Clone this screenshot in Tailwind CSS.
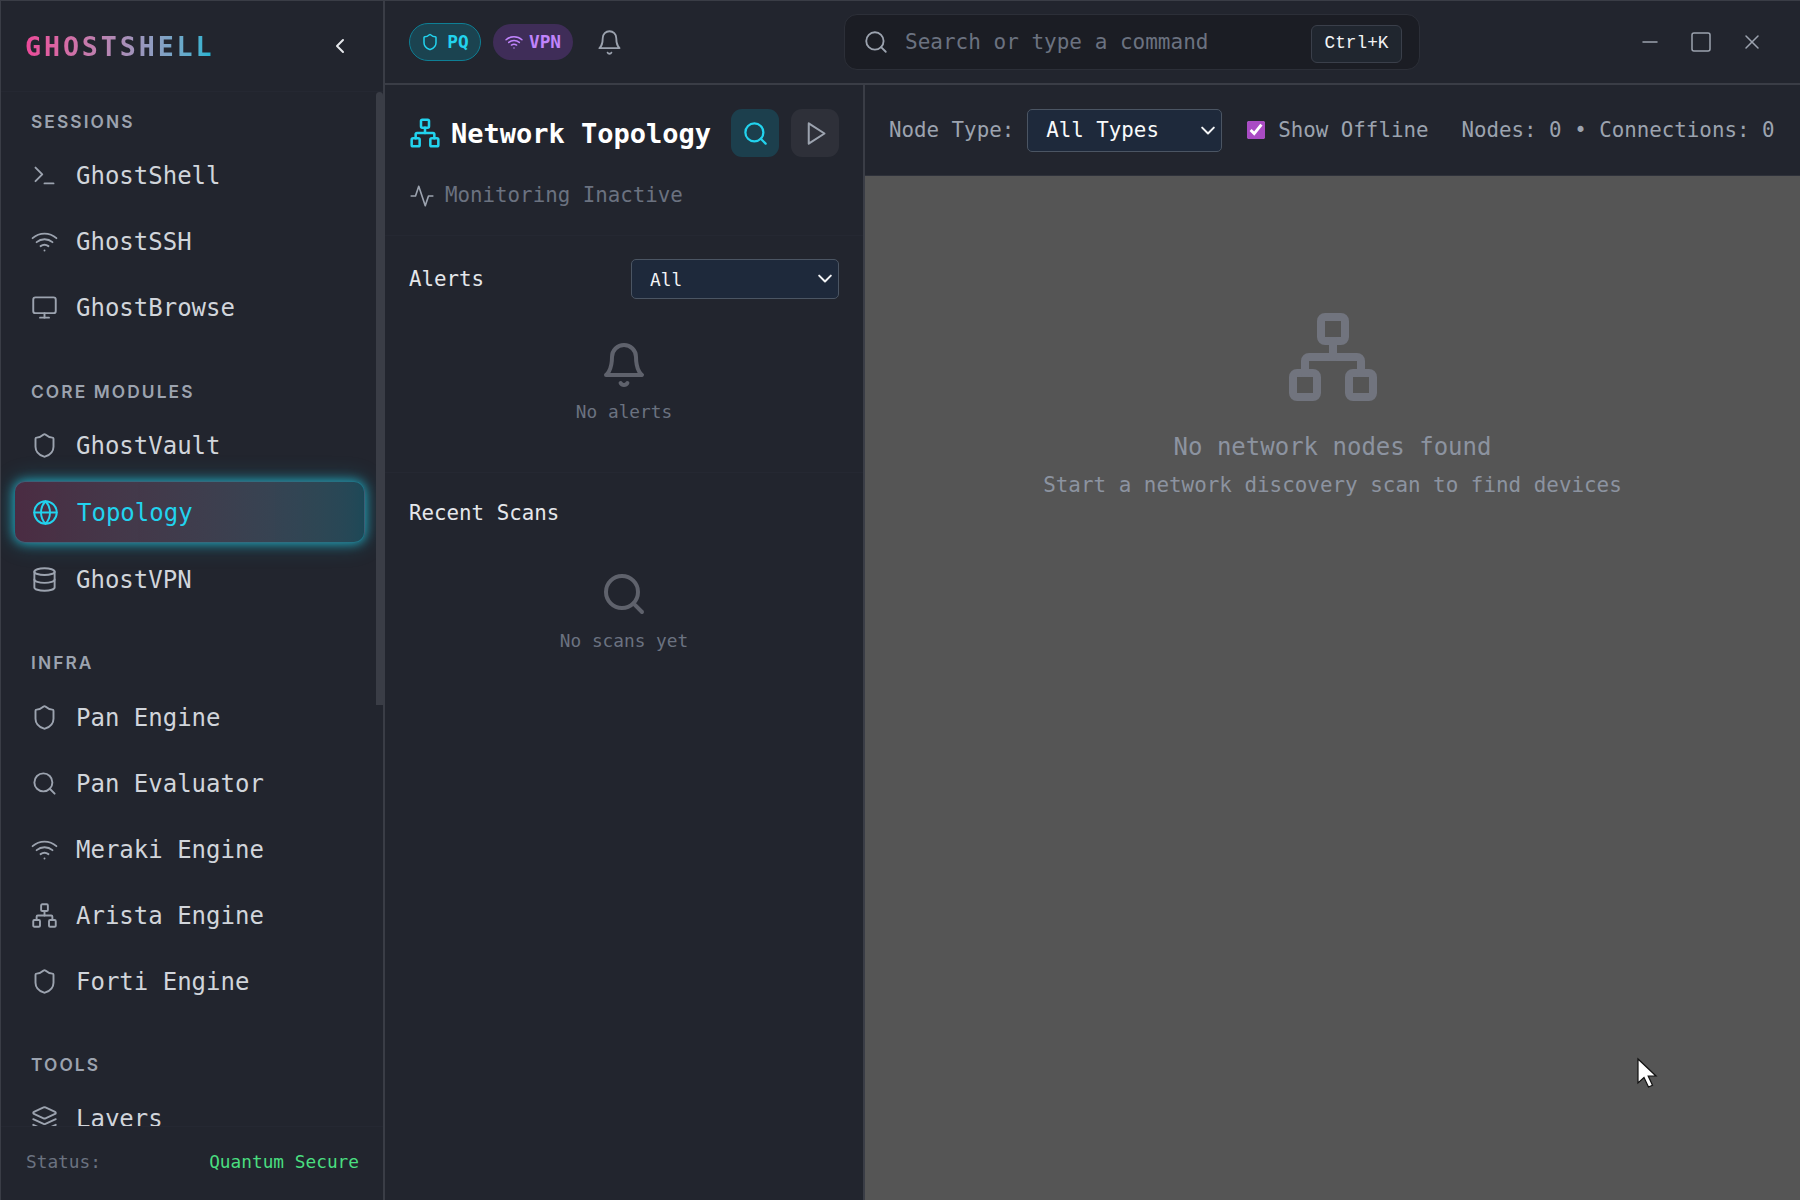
<!DOCTYPE html>
<html lang="en">
<head>
  <meta charset="UTF-8" />
  <title>GhostShell | Network Topology</title>
  <script src="https://cdn.jsdelivr.net/npm/@tailwindcss/browser@4"></script>
</head>
<body class="bg-[#22252e] overflow-hidden font-['DejaVu_Sans_Mono',monospace]">

  <!-- Icon sprites -->
  <svg class="hidden" xmlns="http://www.w3.org/2000/svg">
    <symbol id="i-terminal" viewBox="0 0 24 24"><polyline points="4 17 10 11 4 5"/><line x1="12" x2="20" y1="19" y2="19"/></symbol>
    <symbol id="i-wifi" viewBox="0 0 24 24"><path d="M5 12.55a11 11 0 0 1 14.08 0"/><path d="M1.42 9a16 16 0 0 1 21.16 0"/><path d="M8.53 16.11a6 6 0 0 1 6.95 0"/><line x1="12" x2="12.01" y1="20" y2="20"/></symbol>
    <symbol id="i-monitor" viewBox="0 0 24 24"><rect x="2" y="3" width="20" height="14" rx="2"/><line x1="8" x2="16" y1="21" y2="21"/><line x1="12" x2="12" y1="17" y2="21"/></symbol>
    <symbol id="i-shield" viewBox="0 0 24 24"><path d="M20 13c0 5-3.5 7.5-7.66 8.95a1 1 0 0 1-.67-.01C7.5 20.5 4 18 4 13V6a1 1 0 0 1 1-1c2 0 4.5-1.2 6.24-2.72a1.17 1.17 0 0 1 1.52 0C14.51 3.81 17 5 19 5a1 1 0 0 1 1 1z"/></symbol>
    <symbol id="i-globe" viewBox="0 0 24 24"><circle cx="12" cy="12" r="10"/><path d="M12 2a14.5 14.5 0 0 0 0 20 14.5 14.5 0 0 0 0-20"/><path d="M2 12h20"/></symbol>
    <symbol id="i-database" viewBox="0 0 24 24"><ellipse cx="12" cy="5" rx="9" ry="3"/><path d="M3 5V19A9 3 0 0 0 21 19V5"/><path d="M3 12A9 3 0 0 0 21 12"/></symbol>
    <symbol id="i-search" viewBox="0 0 24 24"><circle cx="11" cy="11" r="8"/><path d="m21 21-4.3-4.3"/></symbol>
    <symbol id="i-network" viewBox="0 0 24 24"><rect x="16" y="16" width="6" height="6" rx="1"/><rect x="2" y="16" width="6" height="6" rx="1"/><rect x="9" y="2" width="6" height="6" rx="1"/><path d="M5 16v-3a1 1 0 0 1 1-1h12a1 1 0 0 1 1 1v3"/><path d="M12 12V8"/></symbol>
    <symbol id="i-layers" viewBox="0 0 24 24"><path d="m12.83 2.18a2 2 0 0 0-1.66 0L2.6 6.08a1 1 0 0 0 0 1.83l8.58 3.91a2 2 0 0 0 1.66 0l8.58-3.9a1 1 0 0 0 0-1.83Z"/><path d="m22 17.65-9.17 4.16a2 2 0 0 1-1.66 0L2 17.65"/><path d="m22 12.65-9.17 4.16a2 2 0 0 1-1.66 0L2 12.65"/></symbol>
    <symbol id="i-bell" viewBox="0 0 24 24"><path d="M6 8a6 6 0 0 1 12 0c0 7 3 9 3 9H3s3-2 3-9"/><path d="M10.3 21a1.94 1.94 0 0 0 3.4 0"/></symbol>
    <symbol id="i-chevron" viewBox="0 0 24 24"><path d="m5 8 7 7 7-7"/></symbol>
  </svg>

  <div class="flex h-[1200px] w-[1800px] border-t border-l border-[#3a3d46]">

    <!-- Sidebar -->
    <aside class="relative flex h-full w-[384px] shrink-0 flex-col border-r-2 border-[#3a3d46]">
      <div class="flex h-[91px] shrink-0 items-center justify-between border-b border-[#252832] pl-[24px] pr-[31px]">
        <span class="mt-[1px] bg-gradient-to-r from-[#ec4899] to-[#06b6d4] bg-clip-text text-[26.67px] font-bold tracking-[2.9px] text-transparent">GHOSTSHELL</span>
        <svg class="h-6 w-6 text-[#e5e7eb]" fill="none" stroke="currentColor" stroke-width="2" stroke-linecap="round" stroke-linejoin="round" viewBox="0 0 24 24"><path d="m15 18-6-6 6-6"/></svg>
      </div>

      <nav class="min-h-0 flex-1 overflow-hidden pl-[13px] pr-[18px] pt-[18px] text-[24px] text-[#d1d5db]">
        <h4 class="mb-[11px] pl-[17px] font-['Inter',sans-serif] text-[17.33px] font-semibold leading-6 tracking-[2.1px] text-[#9ca3af]">SESSIONS</h4>
        <ul class="flex flex-col gap-[6px]">
          <li class="flex h-[60px] items-center gap-[18px] pl-[17px]"><svg class="h-[27px] w-[27px] shrink-0 text-[#9ca3af]" fill="none" stroke="currentColor" stroke-width="1.7" stroke-linecap="round" stroke-linejoin="round"><use href="#i-terminal"/></svg><span class="mt-[2px]">GhostShell</span></li>
          <li class="flex h-[60px] items-center gap-[18px] pl-[17px]"><svg class="h-[27px] w-[27px] shrink-0 text-[#9ca3af]" fill="none" stroke="currentColor" stroke-width="1.7" stroke-linecap="round" stroke-linejoin="round"><use href="#i-wifi"/></svg><span class="mt-[2px]">GhostSSH</span></li>
          <li class="flex h-[60px] items-center gap-[18px] pl-[17px]"><svg class="h-[27px] w-[27px] shrink-0 text-[#9ca3af]" fill="none" stroke="currentColor" stroke-width="1.7" stroke-linecap="round" stroke-linejoin="round"><use href="#i-monitor"/></svg><span class="mt-[2px]">GhostBrowse</span></li>
        </ul>

        <h4 class="mb-[11px] mt-[43px] pl-[17px] font-['Inter',sans-serif] text-[17.33px] font-semibold leading-6 tracking-[2.1px] text-[#9ca3af]">CORE MODULES</h4>
        <ul class="flex flex-col gap-[6px]">
          <li class="flex h-[60px] items-center gap-[18px] pl-[17px]"><svg class="h-[27px] w-[27px] shrink-0 text-[#9ca3af]" fill="none" stroke="currentColor" stroke-width="1.7" stroke-linecap="round" stroke-linejoin="round"><use href="#i-shield"/></svg><span class="mt-[2px]">GhostVault</span></li>
          <li class="flex h-[62px] items-center gap-[18px] rounded-[11px] border border-[#22d3ee]/30 bg-gradient-to-r from-[#ec4899]/20 to-[#06b6d4]/25 pl-[17px] text-[#22d3ee] shadow-[0_0_12px_rgba(34,211,238,0.75),0_0_24px_rgba(34,211,238,0.25)]"><svg class="h-[27px] w-[27px] shrink-0" fill="none" stroke="currentColor" stroke-width="1.7" stroke-linecap="round" stroke-linejoin="round"><use href="#i-globe"/></svg><span class="mt-[2px]">Topology</span></li>
          <li class="flex h-[60px] items-center gap-[18px] pl-[17px]"><svg class="h-[27px] w-[27px] shrink-0 text-[#9ca3af]" fill="none" stroke="currentColor" stroke-width="1.7" stroke-linecap="round" stroke-linejoin="round"><use href="#i-database"/></svg><span class="mt-[2px]">GhostVPN</span></li>
        </ul>

        <h4 class="mb-[12px] mt-[42px] pl-[17px] font-['Inter',sans-serif] text-[17.33px] font-semibold leading-6 tracking-[2.1px] text-[#9ca3af]">INFRA</h4>
        <ul class="flex flex-col gap-[6px]">
          <li class="flex h-[60px] items-center gap-[18px] pl-[17px]"><svg class="h-[27px] w-[27px] shrink-0 text-[#9ca3af]" fill="none" stroke="currentColor" stroke-width="1.7" stroke-linecap="round" stroke-linejoin="round"><use href="#i-shield"/></svg><span class="mt-[2px]">Pan Engine</span></li>
          <li class="flex h-[60px] items-center gap-[18px] pl-[17px]"><svg class="h-[27px] w-[27px] shrink-0 text-[#9ca3af]" fill="none" stroke="currentColor" stroke-width="1.7" stroke-linecap="round" stroke-linejoin="round"><use href="#i-search"/></svg><span class="mt-[2px]">Pan Evaluator</span></li>
          <li class="flex h-[60px] items-center gap-[18px] pl-[17px]"><svg class="h-[27px] w-[27px] shrink-0 text-[#9ca3af]" fill="none" stroke="currentColor" stroke-width="1.7" stroke-linecap="round" stroke-linejoin="round"><use href="#i-wifi"/></svg><span class="mt-[2px]">Meraki Engine</span></li>
          <li class="flex h-[60px] items-center gap-[18px] pl-[17px]"><svg class="h-[27px] w-[27px] shrink-0 text-[#9ca3af]" fill="none" stroke="currentColor" stroke-width="1.7" stroke-linecap="round" stroke-linejoin="round"><use href="#i-network"/></svg><span class="mt-[2px]">Arista Engine</span></li>
          <li class="flex h-[60px] items-center gap-[18px] pl-[17px]"><svg class="h-[27px] w-[27px] shrink-0 text-[#9ca3af]" fill="none" stroke="currentColor" stroke-width="1.7" stroke-linecap="round" stroke-linejoin="round"><use href="#i-shield"/></svg><span class="mt-[2px]">Forti Engine</span></li>
        </ul>

        <h4 class="mb-[11px] mt-[42px] pl-[17px] font-['Inter',sans-serif] text-[17.33px] font-semibold leading-6 tracking-[2.1px] text-[#9ca3af]">TOOLS</h4>
        <ul class="flex flex-col gap-[6px]">
          <li class="flex h-[60px] items-center gap-[18px] pl-[17px]"><svg class="h-[27px] w-[27px] shrink-0 text-[#9ca3af]" fill="none" stroke="currentColor" stroke-width="1.7" stroke-linecap="round" stroke-linejoin="round"><use href="#i-layers"/></svg><span class="mt-[2px]">Layers</span></li>
        </ul>
      </nav>

      <div class="flex h-[74px] shrink-0 items-center justify-between border-t border-[#252832] bg-[#22252e] pb-[2px] pl-[25px] pr-[24px] text-[17.8px]">
        <span class="text-[#6b7280]">Status:</span>
        <span class="text-[#4ade80]">Quantum Secure</span>
      </div>

      <!-- scrollbar thumb -->
      <div class="absolute right-0 top-[91px] h-[613px] w-[7px] rounded-t-[4px] bg-[#3a3d46]"></div>
    </aside>

    <!-- Main -->
    <div class="flex min-w-0 flex-1 flex-col">

      <header class="flex h-[84px] shrink-0 items-center border-b-2 border-[#3a3d46] pl-[24px]">
        <div class="flex items-center gap-[12px]">
          <span class="flex h-[38px] w-[72px] items-center justify-center gap-[8px] rounded-full border border-[#0e7f95] bg-[#1b4350] text-[17.8px] font-bold text-[#22d3ee]">
            <svg class="h-[18px] w-[18px]" fill="none" stroke="currentColor" stroke-width="2" stroke-linecap="round" stroke-linejoin="round"><use href="#i-shield"/></svg>PQ
          </span>
          <span class="flex h-[36px] w-[80px] items-center justify-center gap-[6px] rounded-full bg-[#3f2d58] text-[17.8px] font-bold text-[#c084fc]">
            <svg class="h-[18px] w-[18px]" fill="none" stroke="currentColor" stroke-width="2" stroke-linecap="round" stroke-linejoin="round"><use href="#i-wifi"/></svg>VPN
          </span>
        </div>
        <svg class="ml-[23px] h-[27px] w-[27px] text-[#9ca3af]" fill="none" stroke="currentColor" stroke-width="1.6" stroke-linecap="round" stroke-linejoin="round"><use href="#i-bell"/></svg>

        <div class="ml-[221px] flex h-[56px] w-[576px] items-center rounded-[13px] border border-[#2c2f38] bg-[#1b1d24] pl-[18px] pr-[17px]">
          <svg class="h-[26px] w-[26px] shrink-0 text-[#9ca3af]" fill="none" stroke="currentColor" stroke-width="1.7" stroke-linecap="round" stroke-linejoin="round"><use href="#i-search"/></svg>
          <span class="ml-[16px] mt-[1px] flex-1 text-[21px] text-[#6b7280]">Search or type a command</span>
          <kbd class="mt-[3px] flex h-[38px] w-[91px] items-center justify-center rounded-[6px] border border-[#3a3f4a] bg-[#20262f] text-[17.8px] text-[#f3f4f6]">Ctrl+K</kbd>
        </div>

        <div class="ml-auto flex items-center gap-[27px] pr-[36px] text-[#9ca3af]">
          <svg class="h-6 w-6" fill="none" stroke="currentColor" stroke-width="1.5" stroke-linecap="round" stroke-linejoin="round" viewBox="0 0 24 24"><path d="M5 12h14"/></svg>
          <svg class="h-6 w-6" fill="none" stroke="currentColor" stroke-width="1.5" stroke-linecap="round" stroke-linejoin="round" viewBox="0 0 24 24"><rect x="3" y="3" width="18" height="18" rx="2"/></svg>
          <svg class="h-6 w-6" fill="none" stroke="currentColor" stroke-width="1.5" stroke-linecap="round" stroke-linejoin="round" viewBox="0 0 24 24"><path d="M18 6 6 18"/><path d="m6 6 12 12"/></svg>
        </div>
      </header>

      <div class="flex min-h-0 flex-1">

        <!-- Left panel -->
        <section class="flex w-[480px] shrink-0 flex-col border-r-2 border-[#3a3d46]">
          <div class="h-[151px] shrink-0 border-b border-[#252832] pl-[24px] pr-[24px] pt-[24px]">
            <div class="flex h-[48px] items-center">
              <svg class="h-[32px] w-[32px] shrink-0 text-[#22d3ee]" fill="none" stroke="currentColor" stroke-width="1.9" stroke-linecap="round" stroke-linejoin="round"><use href="#i-network"/></svg>
              <h1 class="ml-[10px] mt-[2px] text-[27px] font-bold text-white">Network Topology</h1>
              <button class="ml-auto flex h-[48px] w-[48px] items-center justify-center rounded-[11px] bg-[#1c3f4d] text-[#22d3ee]">
                <svg class="h-[27px] w-[27px]" fill="none" stroke="currentColor" stroke-width="2" stroke-linecap="round" stroke-linejoin="round"><use href="#i-search"/></svg>
              </button>
              <button class="ml-[12px] flex h-[48px] w-[48px] items-center justify-center rounded-[11px] bg-[#2e3039] text-[#9ca3af]">
                <svg class="h-[27px] w-[27px]" fill="none" stroke="currentColor" stroke-width="1.8" stroke-linecap="round" stroke-linejoin="round" viewBox="0 0 24 24"><polygon points="6 3 20 12 6 21 6 3"/></svg>
              </button>
            </div>
            <div class="mt-[23px] flex items-center gap-[10px] text-[20.8px] text-[#6b7280]">
              <svg class="h-[26px] w-[26px] text-[#9ca3af]" fill="none" stroke="currentColor" stroke-width="1.5" stroke-linecap="round" stroke-linejoin="round" viewBox="0 0 24 24"><path d="M22 12h-4l-3 9L9 3l-3 9H2"/></svg>
              Monitoring Inactive
            </div>
          </div>

          <div class="h-[237px] shrink-0 border-b border-[#252832] px-[24px] pt-[23px]">
            <div class="flex items-center justify-between">
              <h3 class="mt-[2px] text-[20.8px] text-[#e5e7eb]">Alerts</h3>
              <div class="relative">
                <select class="block h-[40px] w-[208px] appearance-none rounded-[5px] border border-[#4b5563] bg-[#1e293b] pl-[18px] pt-[2px] text-[17.8px] text-[#f3f4f6]">
                  <option>All</option>
                </select>
                <svg class="pointer-events-none absolute right-[4px] top-[10px] h-5 w-5 text-[#f3f4f6]" fill="none" stroke="currentColor" stroke-width="2.4" stroke-linecap="round" stroke-linejoin="round"><use href="#i-chevron"/></svg>
              </div>
            </div>
            <div class="mt-[42px] flex flex-col items-center text-[#6b7280]">
              <svg class="h-[48px] w-[48px] text-[#5f626c]" fill="none" stroke="currentColor" stroke-width="2" stroke-linecap="round" stroke-linejoin="round"><use href="#i-bell"/></svg>
              <p class="mt-[10px] text-[17.8px]">No alerts</p>
            </div>
          </div>

          <div class="flex-1 px-[24px] pt-[25px]">
            <h3 class="text-[20.8px] text-[#e5e7eb]">Recent Scans</h3>
            <div class="mt-[41px] flex flex-col items-center text-[#6b7280]">
              <svg class="h-[48px] w-[48px] text-[#5f626c]" fill="none" stroke="currentColor" stroke-width="2" stroke-linecap="round" stroke-linejoin="round"><use href="#i-search"/></svg>
              <p class="mt-[10px] text-[17.8px]">No scans yet</p>
            </div>
          </div>
        </section>

        <!-- Canvas column -->
        <section class="flex min-w-0 flex-1 flex-col">
          <div class="flex h-[91px] shrink-0 items-center border-b border-[#2e313a] pl-[24px] text-[20.8px] text-[#9ca3af]">
            <span class="mt-[2px]">Node Type:</span>
            <div class="relative ml-[13px]">
              <select class="block h-[43px] w-[195px] appearance-none rounded-[5px] border border-[#4b5563] bg-[#1e293b] pl-[18px] pt-[2px] text-[#f9fafb]">
                <option>All Types</option>
              </select>
              <svg class="pointer-events-none absolute right-[4px] top-[12px] h-5 w-5 text-[#f3f4f6]" fill="none" stroke="currentColor" stroke-width="2.4" stroke-linecap="round" stroke-linejoin="round"><use href="#i-chevron"/></svg>
            </div>
            <input type="checkbox" checked class="ml-[25px] h-[18px] w-[18px] accent-[#a94bc4]" />
            <span class="ml-[13px] mt-[2px]">Show Offline</span>
            <span class="ml-[33px] mt-[2px]">Nodes: 0 • Connections: 0</span>
          </div>

          <div class="flex-1 bg-[#555555] pt-[133px]">
            <div class="flex flex-col items-center">
              <svg class="h-[96px] w-[96px] text-[#71747e]" fill="none" stroke="currentColor" stroke-width="2" stroke-linecap="round" stroke-linejoin="round"><use href="#i-network"/></svg>
              <p class="mt-[24px] text-[24px] text-[#8c93a0]">No network nodes found</p>
              <p class="mt-[5px] text-[20.9px] text-[#8c93a0]">Start a network discovery scan to find devices</p>
            </div>
          </div>
        </section>
      </div>
    </div>
  </div>

  <!-- mouse pointer captured in the screenshot -->
  <svg class="absolute left-[1636px] top-[1057px] h-[32px] w-[24px]" viewBox="0 0 24 32"><path d="M2 2v24l6-5.5 4.5 9.5 4-1.8-4.3-9.2H20z" fill="#fff" stroke="#111" stroke-width="1.2"/></svg>
</body>
</html>
